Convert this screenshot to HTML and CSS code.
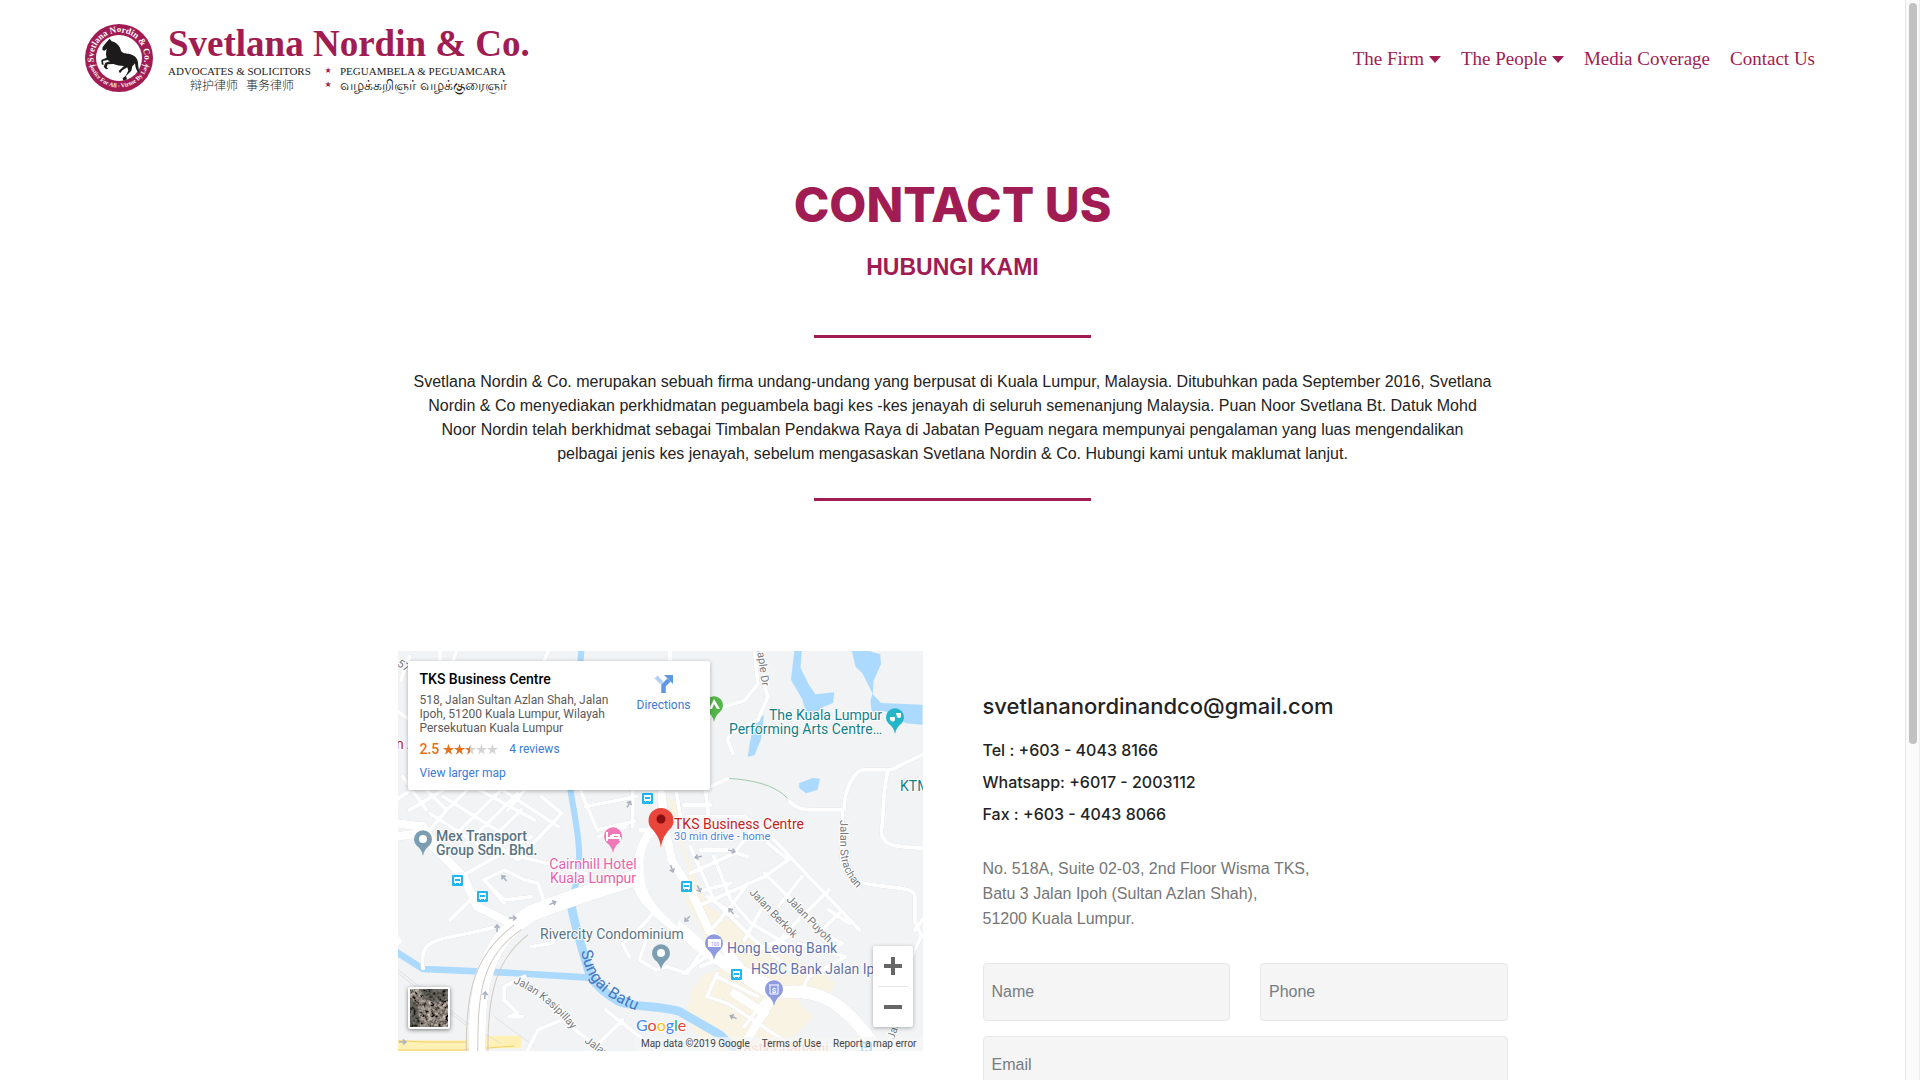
FILE: index.html
```html
<!DOCTYPE html>
<html lang="ms">
<head>
<meta charset="utf-8">
<meta name="viewport" content="width=device-width, initial-scale=1">
<title>Contact Us - Svetlana Nordin &amp; Co.</title>
<link rel="stylesheet" href="styles.css">
</head>
<body>
<div class="page">
  <header class="header">
    <a class="brand" href="#" aria-label="Svetlana Nordin &amp; Co.">
      <svg class="emblem" viewBox="0 0 70 72" width="70" height="72">
        <circle cx="36" cy="36" r="34" fill="#a01c52"/>
        <circle cx="36" cy="36" r="23" fill="#fff"/>
        <g transform="translate(-13 -12) scale(.3333)">
          <path fill="#1c1a1b" d="M119 86L125 94C140 98 150 108 153 122C158 130 166 130 176 131C192 134 203 144 204 158C204 168 207 178 208 190C200 184 196 174 195 160C192 164 190 166 187 169L184 182L168 198L171 208L160 212L158 205L167 197L175 182L172 172L158 180L150 190L146 183L162 168C150 168 140 165 130 162L113 163L110 172L115 176L108 178L101 170L106 158L120 154L112 150L99 153L101 166L95 163L94 150L110 143C107 134 108 126 110 117L103 122L97 120L98 111L108 98Z"/>
        </g>
        <path id="ring-top" d="M14.900 50.200A25.500 25.500 0 1 1 57.100 50.200" fill="none"/>
        <path id="ring-bottom" d="M6.500 41A30 30 0 0 0 65.500 41" fill="none"/>
        <text class="ring ring-name"><textPath href="#ring-top" startOffset="50%">| Svetlana Nordin &amp; Co. |</textPath></text>
        <text class="ring ring-motto"><textPath href="#ring-bottom" startOffset="50%">Justice For All - Virtue By Law</textPath></text>
      </svg>
      <span class="wordmark">
        <strong class="firm">Svetlana Nordin &amp; Co.</strong>
        <span class="tagline">
          <span>ADVOCATES &amp; SOLICITORS</span><i>★</i><span>PEGUAMBELA &amp; PEGUAMCARA</span>
          <span class="zh" lang="zh">辩护律师&nbsp;&nbsp; 事务律师</span><i>★</i><span class="ta" lang="ta">வழக்கறிஞர் வழக்குரைஞர்</span>
        </span>
      </span>
    </a>
    <nav class="nav">
      <a class="more" href="#">The Firm</a>
      <a class="more" href="#">The People</a>
      <a href="#">Media Coverage</a>
      <a href="#">Contact Us</a>
    </nav>
  </header>

  <main class="container">
    <section class="intro">
      <h1>CONTACT US</h1>
      <h2>HUBUNGI KAMI</h2>
      <hr>
      <p>Svetlana Nordin &amp; Co. merupakan sebuah firma undang-undang yang berpusat di Kuala Lumpur, Malaysia. Ditubuhkan pada September 2016, Svetlana<br>
      Nordin &amp; Co menyediakan perkhidmatan peguambela bagi kes -kes jenayah di seluruh semenanjung Malaysia. Puan Noor Svetlana Bt. Datuk Mohd<br>
      Noor Nordin telah berkhidmat sebagai Timbalan Pendakwa Raya di Jabatan Peguam negara mempunyai pengalaman yang luas mengendalikan<br>
      pelbagai jenis kes jenayah, sebelum mengasaskan Svetlana Nordin &amp; Co. Hubungi kami untuk maklumat lanjut.</p>
      <hr>
    </section>

    <section class="columns">
      <div class="map">
        <svg class="tiles" viewBox="0 0 525 400" preserveAspectRatio="xMinYMin slice">
          <defs>
            <path id="pin" d="M0 17C-1 12-3 9-6 7A9 9 0 1 1 6 7C3 9 1 12 0 17z"/>
            <g id="bus">
              <rect x="-5" y="-5" width="11" height="11" rx="1" fill="#1fb6f5"/>
              <path d="M-3-3h7v6h-1v1h-1v-1h-3v1h-1v-1h-1z" fill="#fff"/>
              <path d="M-2-1h5v2h-5z" fill="#1fb6f5"/>
            </g>
            <path id="arrow" d="M-4 0h7M0-2.500l3 2.500-3 2.500" fill="none" stroke="#a9b0c0" stroke-width="1.500"/>
            <path id="river-label" d="M183 300C189 330 200 346 250 364"/>
            <path id="kasipillay" d="M115 332Q147 344 180 386"/>
            <path id="strachan" d="M442 169C443 200 438 218 462 240"/>
          </defs>
          <g transform="scale(.3382 .3333) translate(-6 -3)">
            <g fill="#f9f3e3">
              <path d="M800 440l35 20 10 110 40 110 40 90 90 60 100 90 130 50 60 30-40 50-160-70-190-120-60-110 10-90-40-130z"/>
              <path d="M1130 900l150 80-15 40-90 20 60 60-60 60-60 43H950l-70-60-18-60 10-60 40-50z"/>
            </g>
            <g fill="#acdaff">
              <path d="M1178 3h22l-4 50 24 50 20 30 56-6-4 32-34 14-20 26-26-10-10-40-34-60z"/>
              <path d="M1348 3h50l34 10 2 30-22 50-2 40 24 26 123 5v60l-50-4-60-36-40 4 -4-34 6-24-30-60-20-20z"/>
              <path d="M1060 210l28-14-8 70-20 50-20 4 8-50z"/>
              <path d="M1192 400l40-16 22 2-8 34-34 10-20-16z"/>
            </g>
            <g fill="none" stroke="#acdaff">
              <path stroke-width="18" d="M548 3L516 420c14 90 30 160 25 230-4 60-28 90-22 130"/>
              <path stroke-width="26" d="M519 770c10 60 30 120 50 190 10 40 50 70 90 95 60 20 120 10 180 30l120 70 60 60"/>
              <path stroke-width="20" d="M0 905l80 52 230 10 260 16"/>
            </g>
            <path fill="none" stroke="#fff1b5" stroke-width="38" d="M0 1190h200l60-14h110"/>
            <path fill="none" stroke="#f4cf69" stroke-width="3" d="M0 1172l90 4h120M0 1200h200l150-12"/>
            <path fill="none" stroke="#d7d9dc" stroke-width="2" d="M0 955l210 165 100 60M0 965l208 162M290 1100l120 90"/>
            <path fill="none" stroke="#75b684" stroke-width="2" d="M982 385c70 4 140 20 176 60"/>
            <g class="roads">
              <g stroke-width="12">
                <path d="M40 20L15 90M130 3v30M180 3l-12 30M450 3l-12 30M810 3v40M0 182l40 26M0 450l60-40M20 380l70 100M40 480l100-60M90 420l60 60-50 60M100 490l200 130M150 480l60-60M170 560l150-150M210 580l150-150M250 600l120-120M140 440l250 160M230 410l180 100M300 410l180 120M380 420l-50 60M430 440l60 50-130 140-80-60"/>
                <path d="M545 420l50 120 110-26M560 470l150-30M700 420v110M600 560l80-30M830 430l20 130M850 465h80M915 420l12 100M720 540h90M930 410l50-24"/>
                <path d="M400 560l-190 110M330 610l230 60M260 690l60-30 60 30 40 10 20 60M260 690l60 60 80-10M320 760l-50-60M160 810l80-80"/>
                <path d="M940 180l90-28 40-50-10-99M1090 110l10 30-30 70-80 40-10 20 16 40"/>
                <path d="M1165 455c25 30 50 24 160 24 0-60 30-120 60-120h80l100-50M1455 360c-20 80-10 140-20 180 0 50 40 50 125 55"/>
                <path d="M1320 480v80c0 50-20 100 50 136 60 20 160 10 164 40v80l20 40-40 90-60 160M1534 840l30-40"/>
                <path d="M860 500h170l60 40 280 300M1060 530l-60 80-130 60M1100 580l60 50-70 50-200 90M900 600h80l60 20M870 730l120-30M1090 670l190 190 40 20-30 20M1250 850l60-60M1280 720l-130 130-40 60M1280 780l60 40M1200 680l-70 90M1040 700l-50 70-50 60M940 620l50 130 60 70 150 90M1010 800l-90-60M870 590l70 160 120 120 120 100M1090 760l-60 110M1160 860l-90 40M1190 880l140 40-110 60-30 60"/>
                <path d="M760 790l-60 70-30 20 20 40M760 790l60 50M740 870l-20 60 50 30 30-10 60 20 40-60M850 970l80-60M900 950l50-20"/>
                <path d="M0 880c20 0 12-10 4-20M80 955c-16-100 50-80 220-125M490 840l-30 40-60 10M380 980l-60 30 0 40 40 40-26 10 40 0M490 1110l-70 30-30 60M490 1110l80 60 40 33M620 1080l150 120M590 1190l80-80"/>
                <path d="M950 970l-30 70 60 20 180 120M950 980l120 60M1000 960l120 60M1030 1130l60-80"/>
              </g>
              <g stroke-width="26">
                <path d="M0 520l80 10 60 90 60 60 40 90 80 40M0 560l70-10 60 60M1110 1050l-90 150M1090 1090l-90-60"/>
                <path d="M785 430l10 100 20 100 60 100 50 110 100 120 80 40"/>
              </g>
              <g stroke-width="38">
                <path d="M780 520c-60 60-66 130-60 190 20 60 110 110 180 180l130 90 80 50c130-20 210 10 320 180"/>
              </g>
              <g stroke-width="50">
                <path d="M720 680c-60 20-200 60-320 110"/>
                <path d="M400 790c-160 100-160 260-160 420"/>
              </g>
            </g>
            <g fill="none" stroke="#d0c9c3" stroke-width="3">
              <path d="M350 825c-120 90-144 200-142 380M372 838c-120 80-130 190-130 367M390 855c-90 70-120 170-118 350"/>
            </g>
            <path fill="#f1f3f4" d="M770 545c-50 40-46 140-18 195 24 40 50 60 78 90 12-20 12-80-4-120z"/>
          </g>
          <g>
            <use href="#arrow" transform="translate(231 153) rotate(-60)"/>
            <use href="#arrow" transform="translate(274 218) rotate(70)"/>
            <use href="#arrow" transform="translate(301 238) rotate(65)"/>
            <use href="#arrow" transform="translate(300 206) rotate(170)"/>
            <use href="#arrow" transform="translate(334 200) rotate(15)"/>
            <use href="#arrow" transform="translate(289 268) rotate(135)"/>
            <use href="#arrow" transform="translate(333 260) rotate(230)"/>
            <use href="#arrow" transform="translate(106 227) rotate(230)"/>
            <use href="#arrow" transform="translate(155 252) rotate(-25)"/>
            <use href="#arrow" transform="translate(115 267)"/>
            <use href="#arrow" transform="translate(99 277) rotate(-90)"/>
            <use href="#arrow" transform="translate(87 344) rotate(-85)"/>
            <use href="#arrow" transform="translate(335 366) rotate(205)"/>
            <use href="#arrow" transform="translate(5 391)"/>
            <use href="#bus" x="249" y="147"/>
            <use href="#bus" x="59" y="229"/>
            <use href="#bus" x="84" y="245"/>
            <use href="#bus" x="288" y="235"/>
            <use href="#bus" x="338" y="323"/>
            <use href="#bus" x="468" y="396"/>
          </g>
          <g class="pins">
            <use href="#pin" x="316" y="54" fill="#53b54a"/>
            <path d="M311 58l5-10 6 10zM314 58h5l-3-5z" fill="#fff" fill-rule="evenodd"/>
            <use href="#pin" x="497" y="66" fill="#25b5c8"/>
            <path d="M492 66h5v3q-2 3-5 0zM498 62h5v4q-2 2-4 0z" fill="#fff"/>
            <use href="#pin" x="215" y="185" fill="#ef78b6"/>
            <path d="M209 181v9M209 187h13v3M212 185h2M215 186v-2h6v3" fill="none" stroke="#fff" stroke-width="2"/>
            <use href="#pin" x="25" y="188" fill="#7c9eb2"/><circle cx="25" cy="188" r="4" fill="#fff"/>
            <use href="#pin" x="263" y="302" fill="#7c9eb2"/><circle cx="263" cy="302" r="4" fill="#fff"/>
            <use href="#pin" x="316" y="292" fill="#8f9be0"/>
            <path d="M310 288h13v8h-13z" fill="#fff"/><text class="note" x="313" y="295">100</text>
            <use href="#pin" x="376" y="338" fill="#8f9be0"/>
            <path d="M371 334h10M372 334v9h8v-9" fill="none" stroke="#fff" stroke-width="1"/>
            <text class="dollar" x="376" y="342">$</text>
            <path d="M263 197c-1-9-4-13-8-18a12.500 12.500 0 1 1 16 0c-4 5-7 9-8 18z" fill="#e9453a"/>
            <circle cx="263" cy="168" r="4.500" fill="#8c0f14"/>
          </g>
          <g class="streets">
            <text x="0" y="15" transform="rotate(30 0 12)">57</text>
            <text transform="translate(358 -8) rotate(82)">Maple Dr</text>
            <text><textPath href="#strachan">Jalan Strachan</textPath></text>
            <text transform="translate(351 242) rotate(46)">Jalan Berkok</text>
            <text transform="translate(388 249) rotate(46)">Jalan Puyoh</text>
            <text><textPath href="#kasipillay">Jalan Kasipillay</textPath></text>
            <text transform="translate(186 391) rotate(36)">Jalan</text>
            <text transform="translate(496 389) rotate(-72)">Jalan Ipoh</text>
          </g>
          <text class="river"><textPath href="#river-label">Sungai Batu</textPath></text>
          <g class="places">
            <text class="red" x="-2" y="98">n A</text>
            <g class="teal">
              <text class="end" x="484" y="69">The Kuala Lumpur</text>
              <text class="end" x="484" y="83">Performing Arts Centre…</text>
              <text x="502" y="140">KTM</text>
            </g>
            <text class="red" x="276" y="178">TKS Business Centre</text>
            <text class="drive" x="276" y="189">30 min drive - home</text>
            <g class="pink"><text x="195" y="218">Cairnhill Hotel</text><text x="195" y="232">Kuala Lumpur</text></g>
            <g class="slate"><text class="mid-weight" x="38" y="190">Mex Transport</text><text class="mid-weight" x="38" y="204">Group Sdn. Bhd.</text><text x="142" y="288">Rivercity Condominium</text></g>
            <g class="indigo"><text x="329" y="302">Hong Leong Bank</text><text x="353" y="323">HSBC Bank Jalan Ipoh</text></g>
            <text class="orange" x="338" y="402">Tasty Chapathi</text>
          </g>
          <text class="google" x="238" y="380"><tspan fill="#4285f4">G</tspan><tspan fill="#ea4335">o</tspan><tspan fill="#fbbc05">o</tspan><tspan fill="#4285f4">g</tspan><tspan fill="#34a853">l</tspan><tspan fill="#ea4335">e</tspan></text>
        </svg>

        <div class="place-card">
          <div class="place-info">
            <strong>TKS Business Centre</strong>
            <p>518, Jalan Sultan Azlan Shah, Jalan Ipoh, 51200 Kuala Lumpur, Wilayah Persekutuan Kuala Lumpur</p>
            <div class="rating"><b>2.5</b>
              <svg viewBox="0 0 55 11" width="55" height="11" aria-hidden="true">
                <defs><path id="star" d="M5.500 0l1.300 4h4.200l-3.400 2.500 1.300 4-3.400-2.500-3.400 2.500 1.300-4L0 4h4.200z"/>
                <clipPath id="half"><path d="M0 0h27v11H0z"/></clipPath>
                <g id="stars"><use href="#star"/><use href="#star" x="11"/><use href="#star" x="22"/><use href="#star" x="33"/><use href="#star" x="44"/></g></defs>
                <use href="#stars" fill="#d4d4d4"/><use href="#stars" fill="#e7711b" clip-path="url(#half)"/>
              </svg>
              <a href="#">4 reviews</a>
            </div>
            <a href="#">View larger map</a>
          </div>
          <a class="directions" href="#">
            <svg viewBox="0 0 20 20" width="20" height="20"><path d="M2 3l6 6" stroke="#b5d0f4" stroke-width="4"/><path d="M9.500 19v-7.500L15 6" fill="none" stroke="#5e97e2" stroke-width="4.500"/><path d="M10 1h9v9z" fill="#5e97e2"/></svg>
            Directions
          </a>
        </div>

        <button class="satellite" type="button" aria-label="Show satellite imagery">
          <svg viewBox="0 0 38 38" width="38" height="38">
            <filter id="grain" x="0" y="0" width="1" height="1"><feTurbulence type="fractalNoise" baseFrequency=".28" numOctaves="4" seed="7"/><feColorMatrix values="1.1 .2 0 0 -.4  1 .2 0 0 -.38  .9 .2 0 0 -.36  0 0 0 0 1"/></filter>
            <rect width="38" height="38" filter="url(#grain)"/>
            <path d="M0 8l8 8 2 22H0zM10 0l4 10 14 4 10-5V0z" fill="#1c211f" opacity=".45"/>
          </svg>
        </button>

        <div class="zoom">
          <button type="button" aria-label="Zoom in"><svg viewBox="0 0 18 18" width="18" height="18"><path d="M9 0v18M0 9h18" stroke="#666" stroke-width="4"/></svg></button>
          <button type="button" aria-label="Zoom out"><svg viewBox="0 0 18 18" width="18" height="18"><path d="M0 9h18" stroke="#666" stroke-width="4"/></svg></button>
        </div>

        <div class="credits"><span>Map data ©2019 Google</span><a href="#">Terms of Use</a><a href="#">Report a map error</a></div>
      </div>

      <div class="details">
        <h3>svetlananordinandco@gmail.com</h3>
        <ul class="phones">
          <li>Tel : +603 - 4043 8166</li>
          <li>Whatsapp: +6017 - 2003112</li>
          <li>Fax : +603 - 4043 8066</li>
        </ul>
        <address>No. 518A, Suite 02-03, 2nd Floor Wisma TKS,<br>Batu 3 Jalan Ipoh (Sultan Azlan Shah),<br>51200 Kuala Lumpur.</address>
        <form class="form">
          <input type="text" placeholder="Name" aria-label="Name">
          <input type="tel" placeholder="Phone" aria-label="Phone">
          <input class="wide" type="email" placeholder="Email" aria-label="Email">
        </form>
      </div>
    </section>
  </main>
</div>
<div class="scrollbar" aria-hidden="true"><div class="thumb"></div></div>
</body>
</html>
```
FILE: styles.css
```css
* { box-sizing: border-box; }

body {
  margin: 0;
  height: 100vh;
  overflow: hidden;
  display: grid;
  grid-template-columns: minmax(0, 1fr) 15px;
  background: #fff;
  color: #232323;
  font: 16px/24px "Liberation Sans", Arial, sans-serif;
}
a { text-decoration: none; }
button { border: 0; padding: 0; background: #fff; cursor: pointer; }

.page { min-height: 0; overflow: hidden; }

.scrollbar {
  padding: 3px;
  background: #fafafa;
  border-left: 1px solid #e8e8e8;
  border-right: 1px solid #ededed;
}
.thumb { width: 8px; height: 69%; border-radius: 4px; background: #c1c1c1; }

/* Header */
.header {
  display: flex;
  justify-content: space-between;
  align-items: center;
  padding: 22px 90px 22px 83px;
}
.brand { display: flex; gap: 15px; color: #232323; }
.emblem { display: block; }
.ring { fill: #fff; font-family: "Liberation Serif", serif; font-weight: 700; text-anchor: middle; }
.ring-name { font-size: 9px; }
.ring-motto { font-size: 6px; }
.wordmark { display: flex; flex-direction: column; font-family: "Liberation Serif", "Times New Roman", serif; }
.firm { color: #a01c52; font-size: 37px; line-height: 40px; padding-top: 2px; }
.tagline {
  display: grid;
  grid-template-columns: 148px 24px auto;
  font-size: 11px;
  line-height: 14px;
  white-space: nowrap;
}
.tagline i { color: #a01c52; font: 8px/14px "DejaVu Sans", sans-serif; text-align: center; }
.zh { padding-left: 22px; font-size: 12px; font-family: "Noto Sans CJK SC", sans-serif; font-weight: 300; }
.ta { font-size: 14px; font-family: "Noto Sans", sans-serif; }

.nav { display: flex; gap: 20px; padding-top: 2px; font: 19px/26px "Liberation Serif", "Times New Roman", serif; }
.nav a { display: flex; align-items: center; gap: 5px; color: #a01c52; }
.more::after {
  content: "";
  border: 6px solid transparent;
  border-top: 7px solid #a01c52;
  border-bottom: 0;
}

/* Intro */
.container { max-width: 1140px; margin: 0 auto; padding: 59px 15px 0; }
.intro { text-align: center; padding-bottom: 150px; }
h1 { margin: 0 0 18px; color: #a01c52; font: 800 48px/60px Inter, sans-serif; }
h2 { margin: 0 0 54px; color: #a01c52; font-size: 23px; line-height: 28px; }
hr { width: 25%; height: 3px; margin: 0 auto; border: 0; background: #a01c52; }
.intro p { margin: 32px 0; }

/* Columns */
.columns { display: grid; grid-template-columns: 1fr 1fr; gap: 60px; align-items: start; }

.map {
  position: relative;
  height: 400px;
  overflow: hidden;
  background: #f1f3f4;
  font-family: Roboto, sans-serif;
}
.map a { color: #3a7bd5; }
.tiles { display: block; width: 100%; height: 100%; }
.roads { fill: none; stroke: #fff; stroke-linecap: round; stroke-linejoin: round; filter: drop-shadow(0 0 2px #c3c7cc); }
.places text, .streets text { paint-order: stroke; stroke: #fff; stroke-width: 2px; stroke-linejoin: round; }
.places { font-size: 14px; }
.places .end { text-anchor: end; }
.places .mid-weight { font-weight: 500; }
.places .drive { font-size: 11px; fill: #4a86d8; }
.red { fill: #c5221f; }
.teal { fill: #128089; }
.pink { fill: #e962a9; text-anchor: middle; }
.slate { fill: #5b7383; }
.indigo { fill: #6571a8; }
.orange { fill: #f3a58a; }
.streets { font-size: 11px; fill: #75797d; }
.river { font-size: 16px; fill: #4478c4; }
.note { font-size: 5px; fill: #8f9be0; }
.dollar { font-size: 8px; font-weight: 700; fill: #fff; text-anchor: middle; }
.google { font: 16px Lato, sans-serif; paint-order: stroke; stroke: #fff; stroke-width: 2px; }

.place-card {
  position: absolute;
  top: 10px;
  left: 10px;
  width: 302px;
  display: flex;
  justify-content: space-between;
  padding: 9px 19px 10px 12px;
  background: #fff;
  border-radius: 2px;
  box-shadow: 0 1px 4px rgba(0, 0, 0, .3);
  font-size: 12px;
  line-height: 14px;
}
.place-info { width: 194px; }
.place-info strong { display: block; color: #000; font-size: 14px; font-weight: 500; line-height: 18px; }
.place-info p { margin: 5px 0 7px; color: #5b5b5b; }
.rating { display: flex; align-items: center; gap: 4px; margin-bottom: 10px; }
.rating b { color: #e7711b; font-size: 14px; font-weight: 500; }
.rating a { margin-left: 7px; }
.directions { display: flex; flex-direction: column; align-items: center; gap: 4px; padding-top: 4px; height: 42px; }

.satellite {
  position: absolute;
  left: 10px;
  bottom: 22px;
  width: 42px;
  height: 42px;
  padding: 2px;
  border-radius: 2px;
  box-shadow: 0 1px 4px rgba(0, 0, 0, .5);
}
.satellite svg { display: block; }

.zoom {
  position: absolute;
  right: 10px;
  bottom: 24px;
  width: 40px;
  background: #fff;
  border-radius: 2px;
  box-shadow: 0 1px 4px rgba(0, 0, 0, .3);
  display: grid;
  padding: 0 5px;
}
.zoom button { height: 40px; display: grid; place-items: center; }
.zoom button + button { height: 41px; border-top: 1px solid #e6e6e6; }

.credits {
  position: absolute;
  right: 0;
  bottom: 0;
  display: flex;
  gap: 12px;
  padding: 0 6px;
  background: rgba(245, 245, 245, .7);
  font-size: 10px;
  line-height: 14px;
  color: #444;
}
.map .credits a { color: #444; }

/* Contact details */
.details { padding-top: 39px; }
.details h3 { margin: 0 0 12px; font: 500 22px/32px Inter, sans-serif; }
.phones { margin: 0 0 26px; padding: 0; list-style: none; font: 500 16px/32px Inter, sans-serif; }
address { margin-bottom: 32px; color: #767676; font-style: normal; line-height: 25px; }
.form { display: grid; grid-template-columns: 1fr 1fr; gap: 15px 30px; }
.form input {
  width: 100%;
  height: 58px;
  padding: 0 8px;
  border: 1px solid #e8e8e8;
  border-radius: 4px;
  background: #f5f5f5;
  font: 16px "Liberation Sans", Arial, sans-serif;
}
.form input::placeholder { color: #767d84; opacity: 1; }
.form .wide { grid-column: 1 / -1; }
```
